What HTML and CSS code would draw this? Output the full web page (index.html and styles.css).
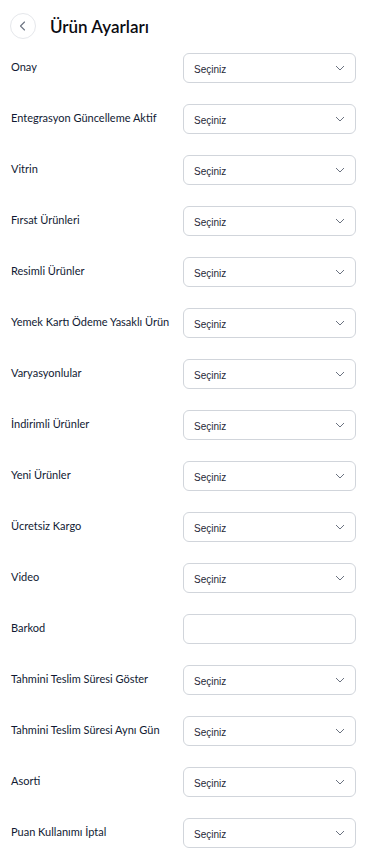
FILE: index.html
```html
<!DOCTYPE html>
<html lang="tr">
<head>
  <meta charset="UTF-8" />
  <title>Ürün Ayarları</title>
  <link rel="stylesheet" href="styles.css">
</head>
<body>
  <div class="page">
    <div class="header">
      <button class="back-btn" aria-label="Geri">
        <svg width="12" height="12" viewBox="0 0 12 12"><path d="M7.5 2 L3.5 6 L7.5 10" fill="none" stroke="#6b7280" stroke-width="1.1" stroke-linecap="round" stroke-linejoin="round"/></svg>
      </button>
      <h1>Ürün Ayarları</h1>
    </div>

    <div class="form">
      <div class="row"><label>Onay</label><div class="select"><span>Seçiniz</span><svg class="chev" width="10" height="6" viewBox="0 0 10 6"><path d="M1 1 L5 5 L9 1" fill="none" stroke="#6b7280" stroke-width="1"/></svg></div></div>
      <div class="row"><label>Entegrasyon Güncelleme Aktif</label><div class="select"><span>Seçiniz</span><svg class="chev" width="10" height="6" viewBox="0 0 10 6"><path d="M1 1 L5 5 L9 1" fill="none" stroke="#6b7280" stroke-width="1"/></svg></div></div>
      <div class="row"><label>Vitrin</label><div class="select"><span>Seçiniz</span><svg class="chev" width="10" height="6" viewBox="0 0 10 6"><path d="M1 1 L5 5 L9 1" fill="none" stroke="#6b7280" stroke-width="1"/></svg></div></div>
      <div class="row"><label>Fırsat Ürünleri</label><div class="select"><span>Seçiniz</span><svg class="chev" width="10" height="6" viewBox="0 0 10 6"><path d="M1 1 L5 5 L9 1" fill="none" stroke="#6b7280" stroke-width="1"/></svg></div></div>
      <div class="row"><label>Resimli Ürünler</label><div class="select"><span>Seçiniz</span><svg class="chev" width="10" height="6" viewBox="0 0 10 6"><path d="M1 1 L5 5 L9 1" fill="none" stroke="#6b7280" stroke-width="1"/></svg></div></div>
      <div class="row"><label>Yemek Kartı Ödeme Yasaklı Ürün</label><div class="select"><span>Seçiniz</span><svg class="chev" width="10" height="6" viewBox="0 0 10 6"><path d="M1 1 L5 5 L9 1" fill="none" stroke="#6b7280" stroke-width="1"/></svg></div></div>
      <div class="row"><label>Varyasyonlular</label><div class="select"><span>Seçiniz</span><svg class="chev" width="10" height="6" viewBox="0 0 10 6"><path d="M1 1 L5 5 L9 1" fill="none" stroke="#6b7280" stroke-width="1"/></svg></div></div>
      <div class="row"><label>İndirimli Ürünler</label><div class="select"><span>Seçiniz</span><svg class="chev" width="10" height="6" viewBox="0 0 10 6"><path d="M1 1 L5 5 L9 1" fill="none" stroke="#6b7280" stroke-width="1"/></svg></div></div>
      <div class="row"><label>Yeni Ürünler</label><div class="select"><span>Seçiniz</span><svg class="chev" width="10" height="6" viewBox="0 0 10 6"><path d="M1 1 L5 5 L9 1" fill="none" stroke="#6b7280" stroke-width="1"/></svg></div></div>
      <div class="row"><label>Ücretsiz Kargo</label><div class="select"><span>Seçiniz</span><svg class="chev" width="10" height="6" viewBox="0 0 10 6"><path d="M1 1 L5 5 L9 1" fill="none" stroke="#6b7280" stroke-width="1"/></svg></div></div>
      <div class="row"><label>Video</label><div class="select"><span>Seçiniz</span><svg class="chev" width="10" height="6" viewBox="0 0 10 6"><path d="M1 1 L5 5 L9 1" fill="none" stroke="#6b7280" stroke-width="1"/></svg></div></div>
      <div class="row"><label>Barkod</label><div class="select text-input"></div></div>
      <div class="row"><label>Tahmini Teslim Süresi Göster</label><div class="select"><span>Seçiniz</span><svg class="chev" width="10" height="6" viewBox="0 0 10 6"><path d="M1 1 L5 5 L9 1" fill="none" stroke="#6b7280" stroke-width="1"/></svg></div></div>
      <div class="row"><label>Tahmini Teslim Süresi Aynı Gün</label><div class="select"><span>Seçiniz</span><svg class="chev" width="10" height="6" viewBox="0 0 10 6"><path d="M1 1 L5 5 L9 1" fill="none" stroke="#6b7280" stroke-width="1"/></svg></div></div>
      <div class="row"><label>Asorti</label><div class="select"><span>Seçiniz</span><svg class="chev" width="10" height="6" viewBox="0 0 10 6"><path d="M1 1 L5 5 L9 1" fill="none" stroke="#6b7280" stroke-width="1"/></svg></div></div>
      <div class="row"><label>Puan Kullanımı İptal</label><div class="select"><span>Seçiniz</span><svg class="chev" width="10" height="6" viewBox="0 0 10 6"><path d="M1 1 L5 5 L9 1" fill="none" stroke="#6b7280" stroke-width="1"/></svg></div></div>
    </div>
  </div>
</body>
</html>
```

FILE: styles.css
```css
body {
  margin: 0;
  background: #fff;
  font-family: 'Lato', sans-serif;
  color: #111827;
}

.page {
  padding: 13px 15px 0 10px;
}

.header {
  display: flex;
  align-items: center;
  gap: 14px;
  height: 26px;
}

.back-btn {
  width: 26px;
  height: 26px;
  border-radius: 50%;
  border: 1px solid #e5e7eb;
  background: #fff;
  padding: 0;
  display: flex;
  align-items: center;
  justify-content: center;
}

h1 {
  margin: 0;
  font-size: 17px;
  font-weight: 600;
  color: #0b0b12;
}

.form {
  display: flex;
  flex-direction: column;
  gap: 21px;
  margin-top: 14px;
}

.row {
  display: flex;
  align-items: flex-start;
  justify-content: space-between;
  padding-left: 1px;
}

.row label {
  font-size: 11px;
  font-weight: 400;
  color: #111a33;
  padding-top: 7px;
}

.select {
  width: 173px;
  height: 30px;
  box-sizing: border-box;
  border: 1px solid #d1d5db;
  border-radius: 6px;
  display: flex;
  align-items: center;
  justify-content: space-between;
  padding: 0 10px;
  font-family: 'Liberation Sans', Arial, sans-serif;
  font-size: 10px;
  color: #1f2937;
}

.select span {
  padding-top: 3px;
}
```
